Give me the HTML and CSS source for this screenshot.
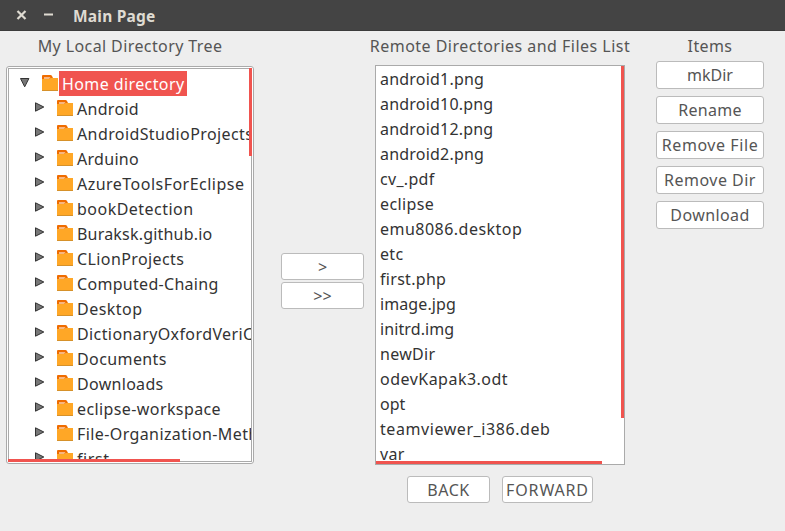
FILE: index.html
```html
<!DOCTYPE html>
<html lang="en">
<head>
<meta charset="utf-8">
<title>Main Page</title>
<link rel="stylesheet" href="styles.css">
</head>
<body>
<svg class="defs" aria-hidden="true">
  <symbol id="folder" viewBox="0 0 16 16"><path fill="#ef6c00" d="M0 1q0-1 1-1h7.500q1 0 1.500 1l1 2v2H0z"/><path fill="#ffa726" d="M0 4h6.500q1 0 2-1H16v13H0z"/><path fill="#fff" d="M2 2.500h6.500L7 3.500H2z"/><path fill="#d6912a" d="M0 15h16v1H0z"/></symbol>
  <symbol id="right" viewBox="0 0 10 10"><path fill="#777" stroke="#333" d="M.5.8v8.400L8.800 5z"/></symbol>
  <symbol id="down" viewBox="0 0 10 10"><path fill="#777" stroke="#333" d="M.5.5h8.400L4.700 8.800z"/></symbol>
</svg>
<header class="titlebar">
  <svg class="controls" viewBox="0 0 40 12"><path d="M2.500 2l8 8M10.500 2l-8 8M29 5.500h9"/></svg>
  <h1 class="track-2">Main Page</h1>
</header>
<main class="content">
  <section class="local">
    <h2 class="track-4">My Local Directory Tree</h2>
    <div class="tree">
      <ul class="view">
        <li class="root"><svg class="arrow"><use href="#down"/></svg><svg class="folder"><use href="#folder"/></svg><span class="track-4">Home directory</span></li>
        <li><svg class="arrow"><use href="#right"/></svg><svg class="folder"><use href="#folder"/></svg><span class="track-3">Android</span></li>
        <li><svg class="arrow"><use href="#right"/></svg><svg class="folder"><use href="#folder"/></svg><span class="track-4">AndroidStudioProjects</span></li>
        <li><svg class="arrow"><use href="#right"/></svg><svg class="folder"><use href="#folder"/></svg><span class="track-3">Arduino</span></li>
        <li><svg class="arrow"><use href="#right"/></svg><svg class="folder"><use href="#folder"/></svg><span class="track-5">AzureToolsForEclipse</span></li>
        <li><svg class="arrow"><use href="#right"/></svg><svg class="folder"><use href="#folder"/></svg><span class="track-5">bookDetection</span></li>
        <li><svg class="arrow"><use href="#right"/></svg><svg class="folder"><use href="#folder"/></svg><span class="track-2">Buraksk.github.io</span></li>
        <li><svg class="arrow"><use href="#right"/></svg><svg class="folder"><use href="#folder"/></svg><span class="track-4">CLionProjects</span></li>
        <li><svg class="arrow"><use href="#right"/></svg><svg class="folder"><use href="#folder"/></svg><span class="track-3">Computed-Chaing</span></li>
        <li><svg class="arrow"><use href="#right"/></svg><svg class="folder"><use href="#folder"/></svg><span class="track-5">Desktop</span></li>
        <li><svg class="arrow"><use href="#right"/></svg><svg class="folder"><use href="#folder"/></svg><span class="track-4">DictionaryOxfordVeriC</span></li>
        <li><svg class="arrow"><use href="#right"/></svg><svg class="folder"><use href="#folder"/></svg><span class="track-4">Documents</span></li>
        <li><svg class="arrow"><use href="#right"/></svg><svg class="folder"><use href="#folder"/></svg><span class="track-3">Downloads</span></li>
        <li><svg class="arrow"><use href="#right"/></svg><svg class="folder"><use href="#folder"/></svg><span class="track-4">eclipse-workspace</span></li>
        <li><svg class="arrow"><use href="#right"/></svg><svg class="folder"><use href="#folder"/></svg><span class="track-4">File-Organization-Meth</span></li>
        <li><svg class="arrow"><use href="#right"/></svg><svg class="folder"><use href="#folder"/></svg><span class="track-6">first</span></li>
      </ul>
      <i class="vbar"></i><i class="hbar"></i>
    </div>
  </section>
  <div class="transfer"><button>&gt;</button><button>&gt;&gt;</button></div>
  <section class="remote">
    <h2 class="track-5">Remote Directories and Files List</h2>
    <div class="list">
      <ul class="view">
        <li><span class="track-2">android1.png</span></li>
        <li><span class="track-2">android10.png</span></li>
        <li><span class="track-2">android12.png</span></li>
        <li><span class="track-2">android2.png</span></li>
        <li><span class="track-3">cv_.pdf</span></li>
        <li><span class="track-4">eclipse</span></li>
        <li><span class="track-5">emu8086.desktop</span></li>
        <li><span class="track-3">etc</span></li>
        <li><span class="track-3">first.php</span></li>
        <li><span class="track-1">image.jpg</span></li>
        <li><span class="track-1">initrd.img</span></li>
        <li><span class="track-3">newDir</span></li>
        <li><span class="track-5">odevKapak3.odt</span></li>
        <li><span>opt</span></li>
        <li><span class="track-6">teamviewer_i386.deb</span></li>
        <li><span class="track-3">var</span></li>
      </ul>
      <i class="vbar"></i><i class="hbar"></i>
    </div>
    <nav><button class="back track-6">BACK</button><button class="forward track-8">FORWARD</button></nav>
  </section>
  <aside class="items">
    <h2 class="track-4">Items</h2>
    <button>mkDir</button>
    <button class="track-3">Rename</button>
    <button class="track-6">Remove File</button>
    <button class="track-5">Remove Dir</button>
    <button class="track-4">Download</button>
  </aside>
</main>
</body>
</html>
```
FILE: styles.css
```css
* { box-sizing: border-box; }
body { margin: 0; height: 531px; overflow: hidden; background: #eee; color: #333; font: 16px/25px "Noto Sans", sans-serif; }
.defs { display: none; }
.titlebar { display: flex; align-items: center; height: 31px; padding-left: 15px; background: #444; border-bottom: 1px solid #3b3b3b; }
.controls { width: 40px; height: 12px; fill: none; stroke: #dfdbd2; stroke-width: 2.2; }
h1 { margin: 1px 0 0 18px; color: #dfdbd2; font-size: 15.500px; line-height: 30px; }
.content { display: flex; height: 500px; }
h2 { margin: 0; color: #555; font-size: 16px; font-weight: 400; line-height: 30px; text-align: center; white-space: nowrap; }
.local { width: 248px; margin-left: 6px; }
.local h2 { height: 35px; }
.tree { position: relative; height: 398px; padding: 1px; border: 1px solid #aaa; border-radius: 3px; background: #fff; }
ul { margin: 0; padding: 0; list-style: none; }
.view { height: 100%; overflow: hidden; }
.tree .view { padding-top: 2px; border: 1px solid #aaa; }
li { display: flex; height: 25px; white-space: nowrap; }
.tree li { padding-left: 26px; }
.tree .root { padding-left: 11px; }
.arrow { flex: none; width: 10px; height: 10px; margin: 6px 12px 0 0; }
.root .arrow { margin-top: 7px; }
.folder { flex: none; width: 16px; height: 16px; margin: 4px 1px 0 0; }
.tree li span { padding: 0 3px; line-height: 27px; }
.root span { background: #f0544f; color: #fff; }
.vbar, .hbar { position: absolute; background: #f0544f; }
.tree .vbar { top: 1px; right: 1px; width: 3px; height: 88px; }
.tree .hbar { left: 1px; bottom: 1px; width: 172px; height: 3px; }
.transfer { display: flex; flex-direction: column; gap: 2px; width: 83px; margin: 222px 0 0 27px; }
button { display: flex; align-items: center; justify-content: center; height: 27px; padding: 0; border: 1px solid #bbb; border-radius: 3px; background: #fff; color: #555; font: inherit; white-space: nowrap; }
.transfer button { padding-top: 2px; }
.remote { width: 250px; margin-left: 11px; }
.remote h2 { height: 34px; margin: 0 -10px; }
.list { position: relative; height: 400px; border: 1px solid #aaa; background: #fff; }
.list li { padding-left: 4px; }
.list .view { padding-top: 1px; }
.list .vbar { top: 0; right: 0; width: 3px; height: 352px; }
.list .hbar { left: 0; bottom: 0; width: 226px; height: 3px; }
nav { display: flex; gap: 12px; margin: 11px 0 0 32px; }
nav button { padding-top: 1px; }
.back { width: 83px; }
.forward { width: 91px; }
.items { display: flex; flex-direction: column; width: 108px; margin-left: 31px; }
.items h2 { height: 30px; }
.items button { height: 28px; margin-bottom: 7px; }
.track-1 { letter-spacing: .1px; }
.track-2 { letter-spacing: .2px; }
.track-3 { letter-spacing: .3px; }
.track-4 { letter-spacing: .4px; }
.track-5 { letter-spacing: .48px; }
.track-6 { letter-spacing: .57px; }
.track-8 { letter-spacing: .85px; }
```
